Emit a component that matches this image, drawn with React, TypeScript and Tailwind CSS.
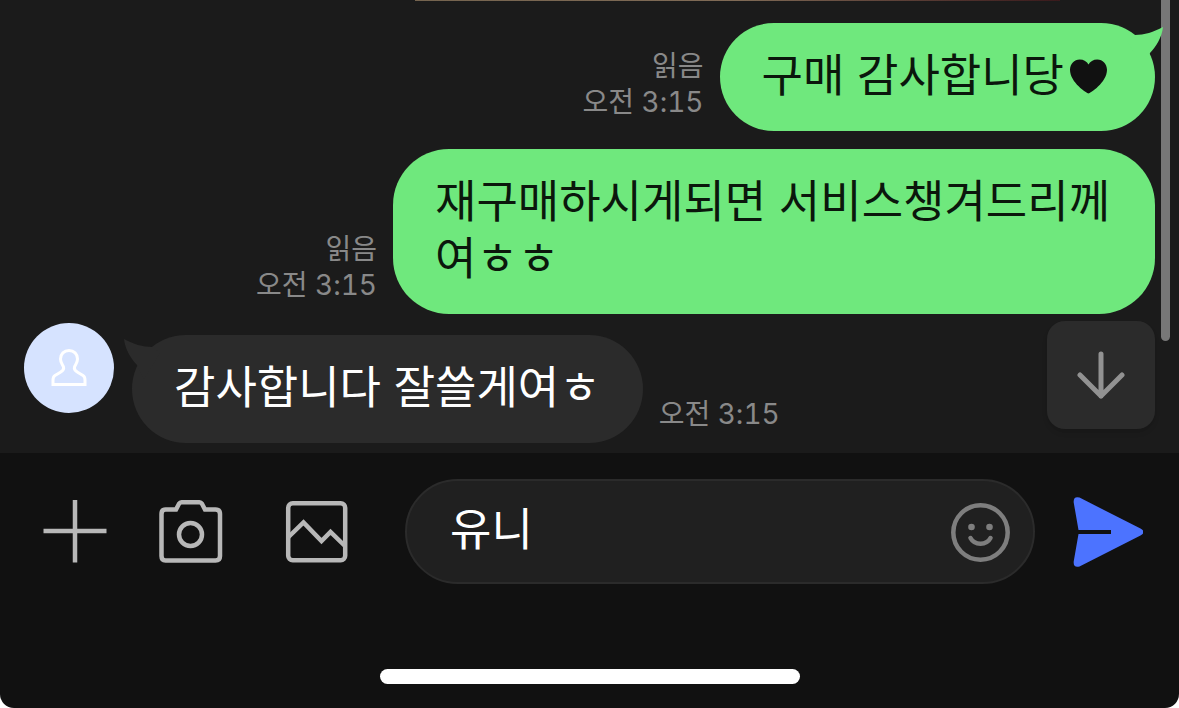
import React, { useState } from "react";
import { clsx } from "clsx";

type Message = {
  id: number;
  text: string;
  heart?: boolean;
  time: string;
  read?: boolean;
  tail?: boolean;
};

const sent: Message[] = [
  { id: 1, text: "구매 감사합니당", heart: true, time: "오전 3:15", read: true, tail: true },
  { id: 2, text: "재구매하시게되면 서비스챙겨드리께여ㅎㅎ", time: "오전 3:15", read: true },
];

const received: Message = { id: 3, text: "감사합니다 잘쓸게여ㅎ", time: "오전 3:15" };

const Meta = ({ message }: { message: Message }) => (
  <div className="mb-[11px] shrink-0 text-right text-[28px] leading-9 text-[#898989] tabular-nums">
    {message.read && <p>읽음</p>}
    <p>{message.time}</p>
  </div>
);

const HeartIcon = () => (
  <svg className="mx-[6px] inline-block h-[35px] w-[37px] align-[-2px]" viewBox="0 0 37 35" fill="#111111" role="img" aria-label="♥">
    <path d="M18.500 34.500C17 34.500 0 23.500 0 10.800C0 4.800 4.300 .5 9.700 .5C13.700 .5 17 2.500 18.500 5.500C20 2.500 23.300 .5 27.300 .5C32.700 .5 37 4.800 37 10.800C37 23.500 20 34.500 18.500 34.500Z" />
  </svg>
);

const SentRow = ({ message }: { message: Message }) => (
  <li className={clsx("flex items-end justify-end gap-4", message.tail && "mb-[9px]")}>
    <Meta message={message} />
    <div className="relative max-w-[762px] rounded-[56px] bg-[#6fe87d] px-[42px] pt-6 pb-[27px] text-[45px] leading-[57px] text-[#0b170c]">
      <p>
        {message.text}
        {message.heart && <HeartIcon />}
      </p>
      {message.tail && (
        <svg className="absolute top-1 -right-2 z-20 h-12 w-10" viewBox="0 0 40 48" fill="#6fe87d" aria-hidden="true">
          <path d="M12 8C21 8 31 5 40 0C39 10 33 20 27 26L20 40L4 14Z" />
        </svg>
      )}
    </div>
  </li>
);

const ReceivedRow = ({ message }: { message: Message }) => (
  <li className="flex items-end gap-[18px]">
    <div className="flex h-[90px] w-[90px] shrink-0 items-center justify-center self-start rounded-full bg-[#d6e3ff]">
      <svg className="h-10 w-10" viewBox="0 1 40 40" fill="none" stroke="#fff" strokeWidth="3" aria-hidden="true">
        <path d="M20 3.500C15 3.500 11.500 7 11.500 12C11.500 16 13.500 17.500 14.500 20C15.500 23 13.500 24 11 25.500L6 28.500C4.500 29.500 4 31 4 33V37.500H36V33C36 31 35.500 29.500 34 28.500L29 25.500C26.500 24 24.500 23 25.500 20C26.500 17.500 28.500 16 28.500 12C28.500 7 25 3.500 20 3.500Z" />
      </svg>
    </div>
    <div className="flex items-end gap-4 pt-3">
      <div className="relative rounded-[56px] bg-[#2b2b2b] px-[42px] pt-6 pb-[27px] text-[45px] leading-[57px] text-white">
        <svg className="absolute top-1 -left-2 h-12 w-10" viewBox="0 0 40 48" fill="#2b2b2b" aria-hidden="true">
          <path d="M28 8C19 8 9 5 0 0C1 10 7 20 13 26L20 40L36 14Z" />
        </svg>
        <p className="relative">{message.text}</p>
      </div>
      <Meta message={message} />
    </div>
  </li>
);

const PlusIcon = () => (
  <svg className="h-16 w-16" viewBox="0 1 64 64" stroke="#b8b8b8" strokeWidth="4.500" aria-hidden="true">
    <path d="M32 .5V63.500M.5 32H63.500" />
  </svg>
);

const CameraIcon = () => (
  <svg className="h-16 w-16" viewBox="0 1 64 64" fill="none" stroke="#b8b8b8" strokeWidth="4.500" aria-hidden="true">
    <path d="M6.500 10.500H17L20 4.800Q21 3.300 22.500 3.300H40.500Q42 3.300 43 4.800L46 10.500H56.500Q61 10.500 61 15V57Q61 61.500 56.500 61.500H6.500Q2.500 61.500 2.500 57V15Q2.500 10.500 6.500 10.500Z" />
    <circle cx="31.500" cy="35.500" r="11.500" />
  </svg>
);

const PhotoIcon = () => (
  <svg className="h-16 w-16" viewBox="0 1 64 64" fill="none" stroke="#b8b8b8" strokeWidth="4.500" aria-hidden="true">
    <rect x="3.200" y="4.200" width="57" height="57" rx="4.500" />
    <path d="M3.500 38L18.500 23.500L36.500 42L45.500 33L60 47" />
  </svg>
);

const SmileIcon = () => (
  <svg className="h-[60px] w-[60px]" viewBox="0 0 60 60" fill="none" stroke="#7e7e7e" strokeWidth="4.500" aria-hidden="true">
    <circle cx="29.500" cy="30.500" r="27.200" />
    <path d="M19.500 36C23.500 43.500 35.500 43.500 39.500 36" strokeLinecap="round" />
    <circle cx="20.500" cy="25" r="3.300" fill="#7e7e7e" stroke="none" />
    <circle cx="38.500" cy="25" r="3.300" fill="#7e7e7e" stroke="none" />
  </svg>
);

const SendIcon = () => (
  <svg className="h-[70px] w-[70px]" viewBox="0 0 70 70" fill="#4c73ff" aria-hidden="true">
    <path d="M6.500 .6L67.500 31.500Q70.500 33.200 70.500 35T67.500 38.500L6.500 69.400Q.2 71 .7 64.500L5.500 37H38V33H5.500L.7 5.500Q.2 -1 6.500 .6Z" />
  </svg>
);

export default function App() {
  const [draft, setDraft] = useState("유니");

  return (
    <div className="bg-white font-[Inter,'Noto_Sans_CJK_KR',sans-serif]">
      <div className="flex min-h-screen flex-col overflow-hidden rounded-b-[14px] bg-[#111111]">
        <main className="relative flex flex-1 flex-col bg-[#1b1b1b] px-6 pb-[10px]">
          {/* Lower edge of the photo message above */}
          <div className="mr-[95px] h-px w-[645px] self-end bg-linear-to-r from-[#75644f] via-[#806b56] to-[#3a1a1c]" />
          <ul className="mt-auto flex flex-col gap-[9px]">
            {sent.map((message) => (
              <SentRow key={message.id} message={message} />
            ))}
            <ReceivedRow message={received} />
          </ul>

          <div className="absolute top-0 right-[9px] h-[341px] w-[9px] rounded-b-full bg-[#777777]" />
          <button
            type="button"
            aria-label="맨 아래로"
            className="absolute right-6 bottom-6 flex h-[108px] w-[108px] items-center justify-center rounded-[18px] bg-[#2b2b2b] shadow-md"
          >
            <svg className="h-12 w-12" viewBox="0 0 48 48" fill="none" stroke="#929292" strokeWidth="5" strokeLinecap="round" strokeLinejoin="round" aria-hidden="true">
              <path d="M24 3V45M3 24L24 45L45 24" />
            </svg>
          </button>
        </main>

        <footer className="flex flex-col">
          <form
            className="flex items-center pt-[26px] pr-9 pl-[43px]"
            onSubmit={(e) => e.preventDefault()}
          >
            <button type="button" aria-label="추가" className="shrink-0">
              <PlusIcon />
            </button>
            <button type="button" aria-label="카메라" className="ml-[52px] shrink-0">
              <CameraIcon />
            </button>
            <button type="button" aria-label="사진" className="ml-[62px] shrink-0">
              <PhotoIcon />
            </button>
            <div className="ml-14 flex h-[105px] min-w-0 flex-1 items-center rounded-[56px] border-2 border-[#2b2b2b] bg-[#202020] pr-[22px] pl-[43px]">
              <input
                type="text"
                aria-label="메시지"
                value={draft}
                onChange={(e) => setDraft(e.target.value)}
                className="mb-1 min-w-0 flex-1 bg-transparent text-[45px] leading-[57px] text-white outline-none"
              />
              <button type="button" aria-label="이모티콘" className="shrink-0">
                <SmileIcon />
              </button>
            </div>
            <button type="submit" aria-label="보내기" className="ml-[38px] shrink-0">
              <SendIcon />
            </button>
          </form>
          <div className="mt-[85px] mb-6 h-[15px] w-[420px] self-center rounded-full bg-white" />
        </footer>
      </div>
    </div>
  );
}
